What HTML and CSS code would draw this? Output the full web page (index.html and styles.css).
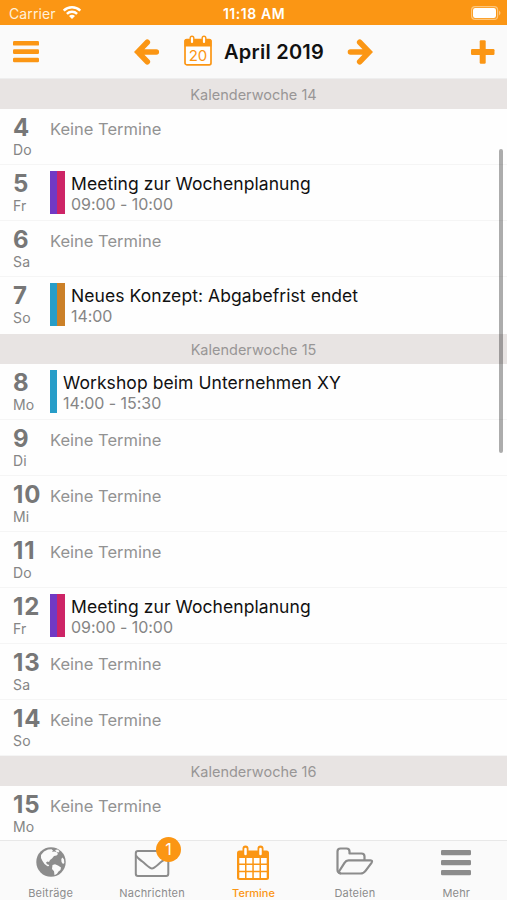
FILE: index.html
```html
<!DOCTYPE html>
<html lang="de">
<head>
<meta charset="utf-8">
<title>Termine</title>
<link rel="stylesheet" href="styles.css">
</head>
<body>
<div class="app">
  <div class="status">
    <div class="carrier"><span>Carrier</span>
      <svg width="20" height="16" viewBox="0 0 20 16" fill="none" stroke="#fff" stroke-width="2.5"><path d="M1.700 6.600a12 12 0 0 1 16.600 0M4.900 9.900a7.400 7.400 0 0 1 10.200 0"/><path d="M10 15l-3-3a4.500 4.500 0 0 1 6 0z" fill="#fff" stroke="none"/></svg>
    </div>
    <span class="clock">11:18 AM</span>
    <svg class="battery" width="31" height="14" viewBox="0 0 31 14"><rect x=".6" y=".6" width="26" height="12.8" rx="3.5" fill="none" stroke="#fdc67c" stroke-width="1.2"/><rect x="2" y="2" width="23" height="10" rx="2.2" fill="#fff"/><path d="M28 4.500q3 2.500 0 5z" fill="#fdc67c"/></svg>
  </div>
  <header class="nav">
    <svg class="menu" width="26" height="22" viewBox="0 0 26 22" fill="#fb9614"><rect width="26" height="4.600" rx="1.200"/><rect y="8.300" width="26" height="4.600" rx="1.200"/><rect y="16.700" width="26" height="4.600" rx="1.200"/></svg>
    <svg class="back" width="26" height="28" viewBox="0 0 26 28" fill="none" stroke="#fb9614" stroke-width="5.600" stroke-linecap="round"><path d="M4 14h18.300M13.300 4.200L3.800 14l9.500 9.800"/><path d="M5 14l5-5v10z" fill="#fb9614" stroke="none"/></svg>
    <svg class="cal" width="28" height="31" viewBox="0 0 28 31"><rect x="1" y="4.500" width="26" height="25.300" rx="1.800" fill="#fff" stroke="#fb9614" stroke-width="1.700"/><path d="M.500 11.500V5.800Q.500 4 3 4h22q2.500 0 2.500 1.800v5.700z" fill="#fb9614"/><path d="M8 3v3.500M20 3v3.500" stroke="#fb9614" stroke-width="5" stroke-linecap="round"/><path d="M8 3v4M20 3v4" stroke="#fff" stroke-width="2.200" stroke-linecap="round"/><text x="14" y="26" text-anchor="middle" class="cal-day">20</text></svg>
    <h1 class="month">April 2019</h1>
    <svg class="next" width="26" height="28" viewBox="0 0 26 28" fill="none" stroke="#fb9614" stroke-width="5.600" stroke-linecap="round"><path d="M3.500 14h18M12.700 4.200L22.200 14l-9.500 9.800"/><path d="M21 14l-5-5v10z" fill="#fb9614" stroke="none"/></svg>
    <svg class="add" width="24" height="24" viewBox="0 0 24 24" fill="#fb9614"><rect x="8.700" y=".3" width="6" height="23.400" rx="1.200"/><rect y="9" width="23.500" height="6" rx="1.200"/></svg>
  </header>
  <main class="list">
    <div class="week">Kalenderwoche 14</div>
    <div class="row"><div class="date"><b>4</b><span>Do</span></div><p class="none">Keine Termine</p></div>
    <div class="row"><div class="date"><b>5</b><span>Fr</span></div><i class="bar purple"></i><i class="bar pink"></i><div class="event"><span class="title">Meeting zur Wochenplanung</span><span class="time">09:00 - 10:00</span></div></div>
    <div class="row"><div class="date"><b>6</b><span>Sa</span></div><p class="none">Keine Termine</p></div>
    <div class="row last"><div class="date"><b>7</b><span>So</span></div><i class="bar blue"></i><i class="bar ochre"></i><div class="event"><span class="title">Neues Konzept: Abgabefrist endet</span><span class="time">14:00</span></div></div>
    <div class="week">Kalenderwoche 15</div>
    <div class="row"><div class="date"><b>8</b><span>Mo</span></div><i class="bar blue"></i><div class="event"><span class="title">Workshop beim Unternehmen XY</span><span class="time">14:00 - 15:30</span></div></div>
    <div class="row"><div class="date"><b>9</b><span>Di</span></div><p class="none">Keine Termine</p></div>
    <div class="row"><div class="date"><b>10</b><span>Mi</span></div><p class="none">Keine Termine</p></div>
    <div class="row"><div class="date"><b>11</b><span>Do</span></div><p class="none">Keine Termine</p></div>
    <div class="row"><div class="date"><b>12</b><span>Fr</span></div><i class="bar purple"></i><i class="bar pink"></i><div class="event"><span class="title">Meeting zur Wochenplanung</span><span class="time">09:00 - 10:00</span></div></div>
    <div class="row"><div class="date"><b>13</b><span>Sa</span></div><p class="none">Keine Termine</p></div>
    <div class="row"><div class="date"><b>14</b><span>So</span></div><p class="none">Keine Termine</p></div>
    <div class="week">Kalenderwoche 16</div>
    <div class="row"><div class="date"><b>15</b><span>Mo</span></div><p class="none">Keine Termine</p></div>
    <div class="scrollbar"></div>
  </main>
  <nav class="tabs">
    <div class="tab"><svg class="globe" width="30" height="30" viewBox="0 0 30 30"><circle cx="15" cy="15" r="14.700" fill="#8c8c8c"/><path fill="#fafafa" d="M5 8l3-3.500 4-2 3.500-.3 1.500 1.300-1 1.500 2-.5 2.500.5 1.500 2-1.500 1.500-2.500.5-2 2.500-2 1.500-1 2-1.500-.5-1.500 1 1 1.800 1.700.5.500 1.200-1.700.2-3-2.200-2-3-1.500-3zM16.500 18l2.500-.7 3 1.200 3 2-.5 2.500-2 1.500-1.500 2.300-2.500 1.500-.5-4-2-2.300zM19 3l2.500-.5 2 1.500-1 1.500-2-.5zM26.500 10.500l1.500 2 .3 3.500-1.300 1-1.500-2-.2-3z"/></svg><span>Beiträge</span></div>
    <div class="tab"><div class="mail"><svg width="36" height="30" viewBox="0 0 36 30" fill="none" stroke="#8c8c8c" stroke-width="2"><rect x="1.800" y="3" width="32.500" height="25" rx="2.200"/><path d="M2 7.500c1 2 3 3.500 6 5.800 4 3 7.500 7.200 10 7.200s6-4.200 10-7.200c3-2.300 5-3.800 6-5.800"/></svg><em class="badge">1</em></div><span>Nachrichten</span></div>
    <div class="tab active"><svg width="34" height="36" viewBox="0 0 34 36"><path fill="#fb9614" d="M3.500 5.500h27q2.500 0 2.500 2.500v24.500q0 2.500-2.500 2.500h-27Q1 35 1 32.500V8q0-2.500 2.500-2.500z"/><path d="M9.500 3.500v5M24.500 3.500v5" stroke="#fb9614" stroke-width="6" stroke-linecap="round"/><path d="M9.500 4v5M24.500 4v5" stroke="#fff" stroke-width="2.500" stroke-linecap="round"/><path fill="#fff" d="M3.300 13h5.700v5.400H3.300zM10.500 13h5.800v5.400h-5.800zM17.800 13h5.700v5.400h-5.700zM25 13h5.700v5.400H25zM3.300 20h5.700v5.700H3.300zM10.500 20h5.800v5.700h-5.800zM17.800 20h5.700v5.700h-5.700zM25 20h5.700v5.700H25zM3.300 27.300h5.700V33H3.300zM10.500 27.300h5.800V33h-5.800zM17.800 27.300h5.700V33h-5.700zM25 27.300h5.700V33H25z"/></svg><span>Termine</span></div>
    <div class="tab"><svg class="folder" width="38" height="28" viewBox="0 0 38 28" fill="none" stroke="#8c8c8c" stroke-width="2.200" stroke-linejoin="round"><path d="M5 26.500Q1.500 26 1.500 23V4.500Q1.500 1.500 4.500 1.500h6q3 0 3 3v2h12q3 0 3 3v3.800"/><path d="M12.500 13.300h22q2.500.2 1 2.500l-6 8q-2 2.700-5 2.700H4.500q-2.500-.2-1-2.700l5-8q1.500-2.500 4-2.500z"/></svg><span>Dateien</span></div>
    <div class="tab"><svg width="30" height="26" viewBox="0 0 30 26" fill="#8c8c8c"><rect width="30" height="5.200" rx="1.300"/><rect y="10" width="30" height="5.200" rx="1.300"/><rect y="20" width="30" height="5.200" rx="1.300"/></svg><span>Mehr</span></div>
  </nav>
</div>
</body>
</html>
```
FILE: styles.css
```css
* { box-sizing: border-box; }
body { margin: 0; background: #fefefe; font-family: Inter, "Liberation Sans", sans-serif; }
svg { display: block; flex: none; }
.app { width: 507px; height: 900px; display: flex; flex-direction: column; overflow: hidden; }
.status { height: 25px; flex: none; display: grid; grid-template-columns: 1fr auto 1fr; align-items: center; background: #fb9614; color: #fff; padding: 2px 5px 0 9px; font-size: 14px; }
.carrier { display: flex; align-items: center; gap: 6px; color: #fff0da; letter-spacing: .1px; }
.carrier svg { margin-top: -3px; }
.clock { font-weight: 600; font-size: 14px; letter-spacing: .55px; padding-right: 3px; }
.battery { justify-self: end; margin-top: -1px; }
.nav { height: 54px; flex: none; display: flex; align-items: center; background: #fafafa; padding: 0 12px 0 13px; border-bottom: 1px solid #eee; }
.back { margin-left: 95px; }
.cal { margin: -2px 0 0 24px; }
.cal-day { font-size: 15px; fill: #fb9614; }
.month { margin: 0 0 0 12px; width: 101px; white-space: nowrap; font-size: 20px; letter-spacing: .25px; font-weight: 600; color: #111; }
.next { margin-left: 22px; }
.add { margin-left: auto; }
.list { flex: 1; min-height: 0; overflow: hidden; position: relative; }
.week { height: 30px; background: #e8e4e3; color: #989696; font-size: 14.500px; line-height: 31px; text-align: center; letter-spacing: 0; }
.row { height: 56px; display: flex; padding-left: 13px; border-bottom: 1px solid #f5f5f5; }
.row.last { height: 57px; border-bottom: 0; }
.date { width: 37px; flex: none; display: flex; flex-direction: column; color: #777; padding-top: 6px; }
.date b { font-size: 24px; line-height: 25px; font-weight: 650; letter-spacing: 1px; }
.date span { font-size: 14px; line-height: 20px; color: #858585; letter-spacing: .2px; }
.none { margin: 10px 0 0; font-size: 16.500px; line-height: 20px; color: #929292; letter-spacing: 0; }
.bar { width: 7px; height: 43px; margin-top: 6px; }
.bar + .bar { width: 8px; }
.purple { background: #7139c4; }
.pink { background: #cd2466; }
.blue { background: #279dc8; }
.ochre { background: #cb8028; }
.event { display: flex; flex-direction: column; padding: 8px 0 0 6px; white-space: nowrap; }
.title { font-size: 17.500px; line-height: 22px; color: #111; letter-spacing: .07px; }
.time { font-size: 16px; line-height: 19px; color: #858585; letter-spacing: -.05px; }
.scrollbar { position: absolute; right: 4px; top: 70px; width: 4px; height: 304px; border-radius: 2px; background: rgba(0,0,0,.32); }
.tabs { height: 60px; flex: none; background: #fafafa; border-top: 1px solid #e8e8e8; display: grid; grid-template-columns: repeat(5, 1fr); }
.tab { display: grid; grid-template-rows: 43px 18px; justify-items: center; align-items: center; color: #8c8c8c; font-size: 11px; letter-spacing: .2px; }
.tab > span { line-height: 18px; }
.globe { margin-top: -1px; }
.folder { margin-top: -3px; }
.active { color: #fb9614; font-weight: 500; letter-spacing: 0; }
.mail { position: relative; }
.badge { position: absolute; left: 22px; top: -11px; width: 25px; height: 25px; border-radius: 50%; background: #fb9614; color: #fff; font-style: normal; font-size: 16px; line-height: 25px; text-align: center; letter-spacing: 0; }
```
